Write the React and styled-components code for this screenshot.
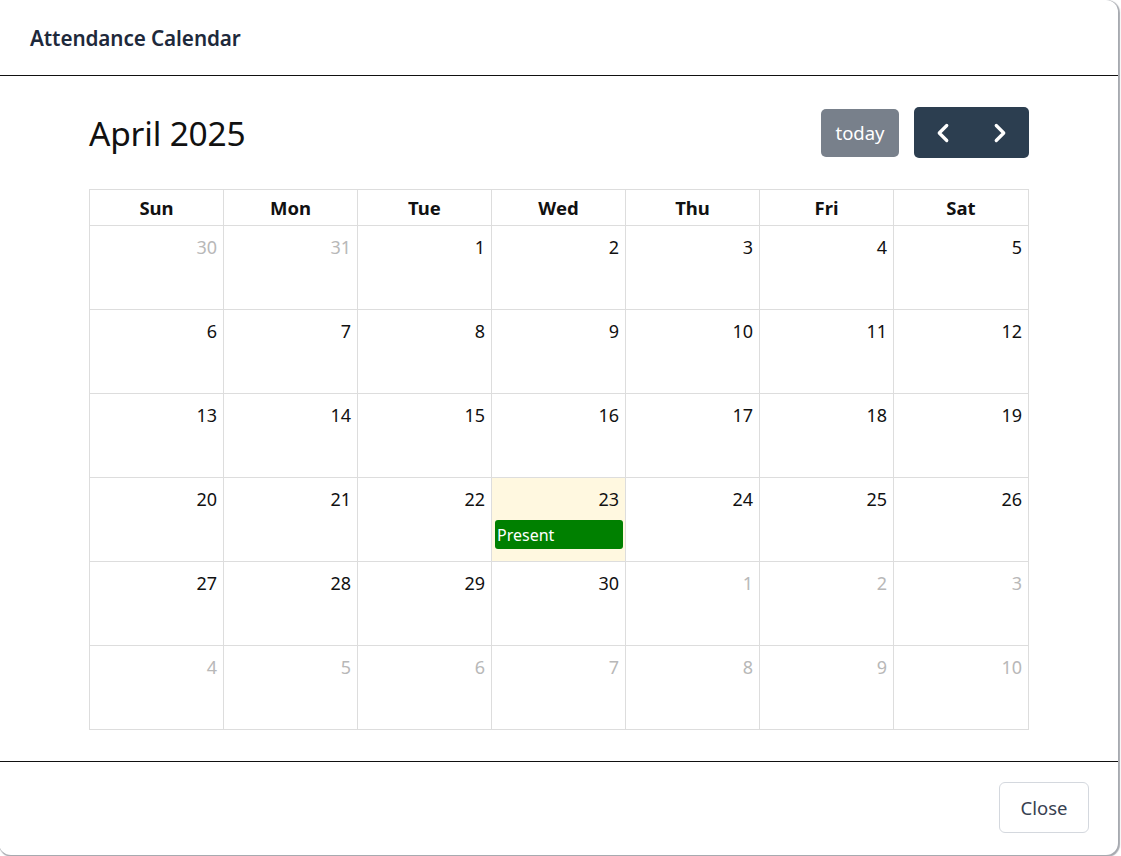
import React from "react";
import styled, { createGlobalStyle } from "styled-components";
import { ChevronLeft, ChevronRight } from "lucide-react";

const Global = createGlobalStyle`
  * { box-sizing: border-box; }
  html, body { margin: 0; padding: 0; background: #ffffff; }
  body { font-family: "Noto Sans", "Open Sans", Arial, sans-serif; }
`;

const Page = styled.div`
  width: 1121px;
  height: 856px;
  background: #ffffff;
  position: relative;
  overflow: hidden;
`;

const Modal = styled.div`
  width: 1119px;
  height: 855px;
  background: #ffffff;
  border-radius: 0 12px 12px 12px;
  box-shadow: 1px 1px 1px 1px rgba(60, 66, 80, 0.45);
  display: flex;
  flex-direction: column;
  margin-left: -1px;
`;

const Header = styled.div`
  height: 76px;
  padding: 0 0 0 31px;
  display: flex;
  align-items: center;
  border-bottom: 1px solid #111;
`;

const Title = styled.h2`
  margin: 0;
  font-size: 20.7px;
  font-weight: 600;
  color: #1e293b;
  letter-spacing: -0.1px;
`;

const Body = styled.div`
  flex: 1;
  padding: 31px 89px 0 90px;
`;

const Toolbar = styled.div`
  display: flex;
  align-items: center;
  justify-content: space-between;
  height: 51px;
  margin-bottom: 31px;
`;

const MonthTitle = styled.h1`
  margin: 0;
  font-size: 33.5px;
  font-weight: 400;
  color: #111;
  letter-spacing: -0.2px;
`;

const Controls = styled.div`
  display: flex;
  align-items: center;
  gap: 15px;
`;

const TodayButton = styled.button`
  height: 48px;
  width: 78px;
  border: none;
  border-radius: 5px;
  background: #78808b;
  color: #fff;
  font-family: inherit;
  font-size: 18.5px;
  padding: 0;
  cursor: default;
`;

const NavGroup = styled.div`
  display: flex;
  height: 51px;
  border-radius: 5px;
  overflow: hidden;
  background: #2c3e50;
`;

const NavButton = styled.button`
  width: 57.5px;
  height: 51px;
  border: none;
  background: transparent;
  color: #fff;
  display: flex;
  align-items: center;
  justify-content: center;
  padding: 0;
`;

const Grid = styled.div`
  width: 940px;
  display: grid;
  grid-template-columns: repeat(6, 134px) 1fr;
  border-top: 1px solid #dddddd;
  border-left: 1px solid #dddddd;
`;

const HeadCell = styled.div`
  height: 36px;
  border-right: 1px solid #dddddd;
  border-bottom: 1px solid #dddddd;
  display: flex;
  align-items: center;
  justify-content: center;
  font-weight: 700;
  font-size: 18.5px;
  color: #111;
`;

const DayCell = styled.div`
  height: 84px;
  border-right: 1px solid #dddddd;
  border-bottom: 1px solid #dddddd;
  background: ${(p) => (p.$today ? "#fff8e0" : "#ffffff")};
  display: flex;
  flex-direction: column;
  align-items: stretch;
`;

const DayNumber = styled.div`
  text-align: right;
  padding: 9px 6px 0 0;
  font-size: 18px;
  line-height: 25px;
  color: ${(p) => (p.$other ? "#b8b8b8" : "#111")};
`;

const Event = styled.div`
  margin: 8px 2px 0 3px;
  height: 29px;
  background: #008000;
  border-radius: 3px;
  color: #fff;
  font-size: 16px;
  line-height: 31px;
  padding-left: 2px;
`;

const Footer = styled.div`
  height: 94px;
  border-top: 1px solid #111;
  display: flex;
  align-items: center;
  justify-content: flex-end;
  padding: 0 29px 0 0;
`;

const CloseButton = styled.button`
  width: 90px;
  height: 51px;
  border: 1px solid #d4d8de;
  border-radius: 6px;
  background: #fff;
  color: #374151;
  font-family: inherit;
  font-size: 18.5px;
  padding: 0;
  margin-top: -2px;
`;

const days = ["Sun", "Mon", "Tue", "Wed", "Thu", "Fri", "Sat"];

const cells = [];
[30, 31].forEach((d) => cells.push({ d, other: true }));
for (let d = 1; d <= 30; d++) cells.push({ d, other: false });
for (let d = 1; d <= 10; d++) cells.push({ d, other: true });

export default function App() {
  return (
    <Page>
      <Global />
      <Modal>
        <Header>
          <Title>Attendance Calendar</Title>
        </Header>
        <Body>
          <Toolbar>
            <MonthTitle>April 2025</MonthTitle>
            <Controls>
              <TodayButton>today</TodayButton>
              <NavGroup>
                <NavButton aria-label="prev">
                  <ChevronLeft size={30} strokeWidth={2.6} />
                </NavButton>
                <NavButton aria-label="next">
                  <ChevronRight size={30} strokeWidth={2.6} />
                </NavButton>
              </NavGroup>
            </Controls>
          </Toolbar>
          <Grid>
            {days.map((d) => (
              <HeadCell key={d}>{d}</HeadCell>
            ))}
            {cells.map((c, i) => {
              const today = !c.other && c.d === 23;
              return (
                <DayCell key={i} $today={today}>
                  <DayNumber $other={c.other}>{c.d}</DayNumber>
                  {today && <Event>Present</Event>}
                </DayCell>
              );
            })}
          </Grid>
        </Body>
        <Footer>
          <CloseButton>Close</CloseButton>
        </Footer>
      </Modal>
    </Page>
  );
}
